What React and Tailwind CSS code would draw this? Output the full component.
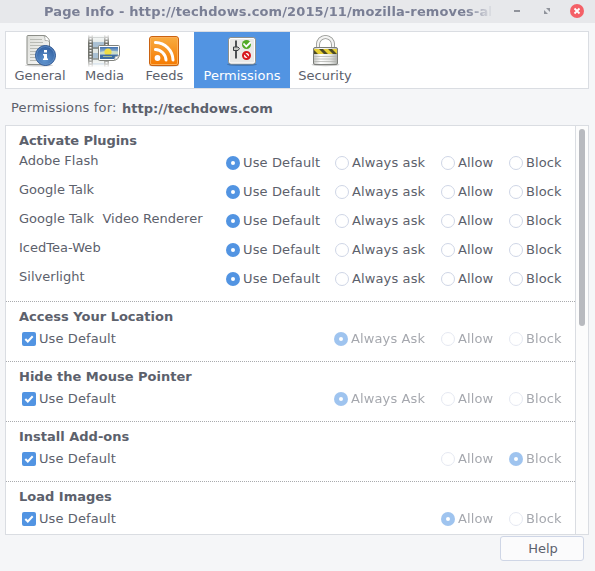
const OPTIONS = ['Use Default', 'Always ask', 'Allow', 'Block'];

const PLUGINS = ['Adobe Flash', 'Google Talk', 'Google Talk  Video Renderer', 'IcedTea-Web', 'Silverlight'];

const SECTIONS = [
  { title: 'Access Your Location', ask: true, selected: 'Always Ask' },
  { title: 'Hide the Mouse Pointer', ask: true, selected: 'Always Ask' },
  { title: 'Install Add-ons', ask: false, selected: 'Block' },
  { title: 'Load Images', ask: false, selected: 'Allow' },
];

function GeneralIcon() {
  return (
    <svg width="32" height="32" viewBox="0 0 32 32">
      <defs>
        <linearGradient id="paper" x1="0" y1="0" x2="1" y2="1">
          <stop offset="0" stopColor="#dcddd8" />
          <stop offset="1" stopColor="#fbfbfa" />
        </linearGradient>
        <radialGradient id="info" cx=".45" cy=".75" r=".75">
          <stop offset="0" stopColor="#5f94cf" />
          <stop offset="1" stopColor="#2f5d9f" />
        </radialGradient>
      </defs>
      <ellipse cx="15" cy="30.200" rx="14" ry="1.400" fill="#000" opacity=".18" />
      <path d="M4 .5h16q2 0 3.500 2l1 1.500q1 1 1 3v21.500q0 1-1 1h-20.500q-1 0-1-1v-27q0-1 1-1z" fill="url(#paper)" stroke="#8b8d87" />
      <path d="M20 1q1.500 2 1 4.500 3-.5 4.500 1.500-.5-5-5.500-6z" fill="#fff" stroke="#9a9c96" strokeWidth=".7" />
      <path d="M6 4.500h12M6 7.500h13M6 10.500h14M6 13.500h8M6 16.500h6M6 19.500h5M6 22.500h6M6 25.500h7" stroke="#b9bbb5" />
      <circle cx="21.500" cy="20.500" r="10" fill="url(#info)" stroke="#2c5693" />
      <circle cx="21.500" cy="20.500" r="9" fill="none" stroke="#6a96cb" strokeWidth=".7" />
      <path d="M20 15h3v2.500h-3zM19 19h4v4.500h1V25h-5v-1.500h1v-3h-1z" fill="#fff" />
    </svg>
  );
}

function MediaIcon() {
  return (
    <svg width="33" height="32" viewBox="0 0 33 32">
      <defs>
        <linearGradient id="fade" x1="0" y1="0" x2="0" y2="1">
          <stop offset="0" stopColor="#fff" stopOpacity=".9" />
          <stop offset=".25" stopColor="#fff" stopOpacity="0" />
          <stop offset=".7" stopColor="#fff" stopOpacity="0" />
          <stop offset="1" stopColor="#fff" stopOpacity=".95" />
        </linearGradient>
        <linearGradient id="sky" x1="0" y1="0" x2="0" y2="1">
          <stop offset="0" stopColor="#3f70ae" />
          <stop offset="1" stopColor="#c5dae6" />
        </linearGradient>
      </defs>
      <path d="M0 0h5v32H0zM16 0h5v32h-5z" fill="#72746e" />
      <path d="M5 0h11v32H5z" fill="#8d9594" />
      <path d="M5 0h11v2H5zM5 3h11v9H5zM5 14h11v9H5zM5 25h11v7H5z" fill="#e3e9e6" />
      <path d="M5 7h11v5H5zM5 18h11v5H5zM5 28h11v2H5z" fill="#a9c0d3" />
      <path d="M2.500 0v32M18.500 0v32" stroke="#f6f6f6" strokeWidth="2" strokeDasharray="1.500 1.500" />
      <path d="M0 0h21v32H0z" fill="url(#fade)" />
      <path d="M11.500 10.500q-1 0-1 1v13q0 1 1 1h15q4-1 5-5v-9q0-1-1-1z" fill="#fff" stroke="#80827d" />
      <path d="M12 12h18v7H12z" fill="url(#sky)" />
      <path d="M12 17.500q5-3 18-1v3H12z" fill="#cbdcc8" />
      <circle cx="20" cy="17" r="3.600" fill="#eedc46" />
      <path d="M12 19.500h18v1l-4 3.500H12z" fill="#3e6da4" />
      <path d="M15 21.500h9" stroke="#a5b98b" />
      <path d="M26 25.500q1.500-2 1-4 2.500.3 4-1.500-.5 4-5 5.500z" fill="#fff" stroke="#999b96" strokeWidth=".7" />
    </svg>
  );
}

function FeedsIcon() {
  return (
    <svg width="33" height="32" viewBox="0 0 33 32">
      <defs>
        <linearGradient id="feed" x1="0" y1="0" x2="0" y2="1">
          <stop offset="0" stopColor="#f8ad42" />
          <stop offset="1" stopColor="#f57900" />
        </linearGradient>
      </defs>
      <ellipse cx="16" cy="30.500" rx="15" ry="1.300" fill="#000" opacity=".2" />
      <rect x="1.500" y="1.500" width="29" height="29" rx="2.500" fill="url(#feed)" stroke="#ca6210" />
      <rect x="2.500" y="2.500" width="27" height="27" rx="1.500" fill="none" stroke="#fcaf57" />
      <circle cx="9.500" cy="23" r="2.900" fill="#fff" />
      <path d="M7.500 14.500a11 11 0 0 1 10.500 10.500M7.500 7.500a18 18 0 0 1 17.500 17.500" fill="none" stroke="#fff" strokeWidth="3" strokeLinecap="round" />
    </svg>
  );
}

function PermissionsIcon() {
  return (
    <svg width="32" height="32" viewBox="0 0 32 32">
      <ellipse cx="16" cy="29.500" rx="15" ry="1.600" fill="#000" opacity=".2" />
      <rect x="2.500" y="2.500" width="27" height="26.500" rx="2.500" fill="#e9e9e7" stroke="#8f918c" />
      <rect x="3.500" y="3.500" width="25" height="24.500" rx="1.500" fill="none" stroke="#fff" />
      <path d="M10 5.500v18" stroke="#3c4043" strokeWidth="1.800" />
      <path d="M7.500 12h4.500l1.500 1.500L12 15.500H7.500z" fill="#c5c7c3" stroke="#3c4043" />
      <circle cx="20.500" cy="9.500" r="4.500" fill="#52aa25" />
      <path d="m17.500 8.500 2.800 3 4.500-4.500" fill="none" stroke="#fff" strokeWidth="1.800" />
      <circle cx="20.500" cy="20.500" r="3.500" fill="#fff" stroke="#d8181d" strokeWidth="2" />
      <path d="m18 18 5 5" stroke="#d8181d" strokeWidth="1.800" />
    </svg>
  );
}

function SecurityIcon() {
  return (
    <svg width="32" height="32" viewBox="0 0 32 32">
      <defs>
        <linearGradient id="metal" x1="0" y1="0" x2="1" y2="0">
          <stop offset="0" stopColor="#c4c5c2" />
          <stop offset=".3" stopColor="#fff" />
          <stop offset=".7" stopColor="#e6e7e5" />
          <stop offset="1" stopColor="#aeb0ac" />
        </linearGradient>
      </defs>
      <ellipse cx="16.500" cy="29.800" rx="14" ry="1.500" fill="#000" opacity=".22" />
      <path d="M9 14V9.500a7.500 7.500 0 0 1 15 0V14" fill="none" stroke="#90928e" strokeWidth="4" />
      <path d="M9 14V9.500a7.500 7.500 0 0 1 15 0V14" fill="none" stroke="#f3f3f2" strokeWidth="2.400" />
      <rect x="4.500" y="12.500" width="24" height="17" rx="1.500" fill="url(#metal)" stroke="#7c7e7a" />
      <path d="M5 14h23v5H5z" fill="#e6cf35" />
      <path d="M5 15l4 4H5zM10 14h4l5 5h-4zM19 14h4l5 5h-4z" fill="#4c4a25" />
      <path d="M5 21.500h23M5 24h23M5 26.500h23" stroke="#b2b4b0" strokeWidth=".8" />
    </svg>
  );
}

const TABS = [
  { label: 'General', width: 'w-[68px]', Icon: GeneralIcon },
  { label: 'Media', width: 'w-[61px]', Icon: MediaIcon },
  { label: 'Feeds', width: 'w-[59px]', Icon: FeedsIcon },
  { label: 'Permissions', width: 'w-24', Icon: PermissionsIcon, active: true },
  { label: 'Security', width: 'w-[70px]', Icon: SecurityIcon },
];

function Radio({ label, checked }) {
  return (
    <div className="flex items-start">
      <span
        className={
          checked
            ? 'mt-0.5 flex size-3.5 shrink-0 items-center justify-center rounded-full bg-[#5294e2]'
            : 'mt-0.5 size-3.5 shrink-0 rounded-full border border-[#cfd6e6] bg-white'
        }
      >
        {checked && <span className="size-1 rounded-full bg-white" />}
      </span>
      <span className="ml-[3px] whitespace-nowrap pt-px tracking-[0.12px]">{label}</span>
    </div>
  );
}

function PluginRow({ name }) {
  return (
    <div className="flex h-[29px] items-start pl-[13px]">
      <div className="w-[207px] whitespace-pre pt-px tracking-[0.02px]">{name}</div>
      <div className="grid grid-cols-[109px_106px_68px_60px] pt-0.5">
        {OPTIONS.map((option) => (
          <Radio key={option} label={option} checked={option === 'Use Default'} />
        ))}
      </div>
    </div>
  );
}

function Section({ title, ask, selected }) {
  return (
    <div className="h-[60px] border-t border-dotted border-[#a9abae] pt-[7px]">
      <div className="pl-[13px] font-bold">{title}</div>
      <div className="mt-[5px] flex pl-4">
        <div className="flex w-[312px] items-start">
          <span className="mt-0.5 flex size-3.5 items-center justify-center rounded-xs bg-[#5294e2]">
            <svg width="10" height="8" viewBox="0 0 10 8">
              <path d="m1.300 4 2.500 2.500L8.700 1.300" fill="none" stroke="#fff" strokeWidth="2" />
            </svg>
          </span>
          <span className="ml-[3px] pt-px tracking-[0.1px]">Use Default</span>
        </div>
        <div className="grid grid-cols-[107px_68px_60px] opacity-55">
          {ask ? <Radio label="Always Ask" checked={selected === 'Always Ask'} /> : <span />}
          <Radio label="Allow" checked={selected === 'Allow'} />
          <Radio label="Block" checked={selected === 'Block'} />
        </div>
      </div>
    </div>
  );
}

function TitleBar() {
  return (
    <div className="flex h-[23px] items-start bg-[#e7e8eb]">
      <div className="ml-11 mt-1 w-[447px] whitespace-nowrap font-bold tracking-[0.12px] text-[#7a7f95] [mask-image:linear-gradient(to_right,black_422px,transparent_450px)]">
        Page Info - http://techdows.com/2015/11/mozilla-removes-al
      </div>
      <svg className="ml-auto" width="104" height="23" viewBox="0 0 104 23">
        <path d="M23 10h6v2h-6z" fill="#90939b" />
        <path d="M55 8h4v4zM53 10v4h4z" fill="#90939b" />
        <circle cx="86" cy="11" r="7" fill="#f46067" />
        <path d="m83.500 8.500 5 5M88.500 8.500l-5 5" stroke="#fff" strokeWidth="1.800" />
      </svg>
    </div>
  );
}

export default function App() {
  return (
    <div className="flex h-[571px] w-[595px] flex-col overflow-hidden bg-[#f5f6f8] font-['DejaVu_Sans',sans-serif] text-[13px] leading-4 text-[#5c616c]">
      <TitleBar />
      <div className="ml-[5px] mt-2 flex h-[58px] w-[584px] shrink-0 border border-[#dadde2] bg-white">
        {TABS.map(({ label, width, Icon, active }) => (
          <div
            key={label}
            className={`flex flex-col items-center pt-[3px] ${width} ${active ? 'bg-[#5294e2] text-white' : ''}`}
          >
            <Icon />
            <span className="mt-px">{label}</span>
          </div>
        ))}
      </div>
      <div className="flex h-9 shrink-0 pl-[11px] pt-[11px]">
        <span className="w-[111px] whitespace-nowrap tracking-[0.15px]">Permissions for:</span>
        <span className="pt-px font-bold">http://techdows.com</span>
      </div>
      <div className="ml-[5px] flex h-[410px] w-[584px] shrink-0 overflow-hidden border border-[#dadde2] bg-white">
        <div className="w-[569px] shrink-0">
          <div className="h-[175px] pt-[7px]">
            <div className="mb-[3px] pl-[13px] font-bold tracking-[-0.08px]">Activate Plugins</div>
            {PLUGINS.map((name) => (
              <PluginRow key={name} name={name} />
            ))}
          </div>
          {SECTIONS.map((section) => (
            <Section key={section.title} {...section} />
          ))}
        </div>
        <div className="w-[13px] border-l border-[#dadde2] bg-[#fcfcfc] pl-[3px] pt-[3px]">
          <div className="h-[197px] w-1.5 rounded-full bg-[#b8babf]" />
        </div>
      </div>
      <div className="flex pl-[500px] pt-px">
        <div className="flex h-[25px] w-[84px] items-center justify-center rounded-[3px] border border-[#cfd6e6] bg-[#fbfbfc] pl-0.5 pt-px">
          Help
        </div>
      </div>
    </div>
  );
}
